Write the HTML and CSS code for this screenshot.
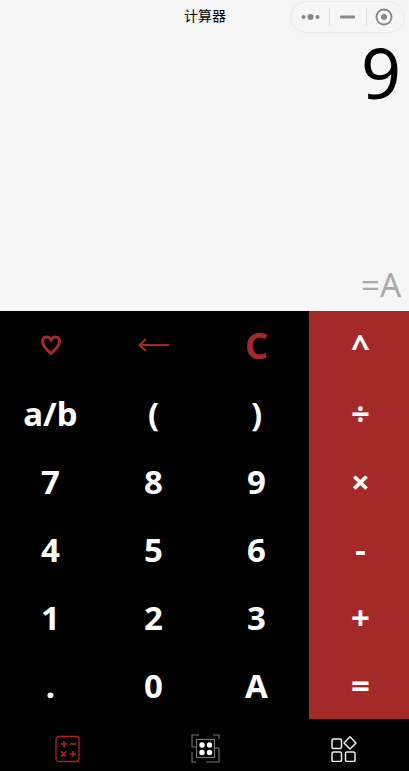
FILE: index.html
```html
<!DOCTYPE html>
<html lang="zh">
<head>
  <meta charset="UTF-8">
  <meta name="viewport" content="width=device-width, initial-scale=1.0">
  <title>计算器</title>
  <link rel="stylesheet" href="styles.css">
</head>
<body>
  <div class="display">
    <div class="title-bar">
      <span class="title">计算器</span>
      <div class="capsule">
        <svg class="cap-icon" width="20" height="8" viewBox="0 0 20 8"><circle cx="2.5" cy="4" r="2"/><circle cx="9.5" cy="4" r="3"/><circle cx="16.5" cy="4" r="2"/></svg>
        <i class="cap-line"></i>
        <svg class="cap-icon" width="16" height="4" viewBox="0 0 16 4"><rect y="0.5" width="15" height="3" rx="1"/></svg>
        <i class="cap-line"></i>
        <svg class="cap-icon" width="18" height="18" viewBox="0 0 18 18"><circle cx="9" cy="9" r="7.5" fill="none" stroke="#888" stroke-width="1.8"/><circle cx="9" cy="9" r="3"/></svg>
      </div>
    </div>
    <div class="value">9</div>
    <div class="result">=A</div>
  </div>

  <div class="keypad">
    <div class="keys">
      <button class="key red">
        <svg width="22" height="22" viewBox="0 0 22 22"><path d="M11 19.5 C8 16.5 2.500 12.500 2.500 7.500 C2.500 4.500 4.500 3 6.500 3 C8.500 3 10 4.200 11 6 C12 4.200 13.500 3 15.500 3 C17.500 3 19.500 4.500 19.500 7.500 C19.500 12.500 14 16.500 11 19.500 Z" fill="none" stroke="#a42a2a" stroke-width="3"/></svg>
      </button>
      <button class="key red">
        <svg width="32" height="14" viewBox="0 0 32 14"><path d="M31 7 H2 M8 1 L1.500 7 L8 13" fill="none" stroke="#a42a2a" stroke-width="2.200"/></svg>
      </button>
      <button class="key red big">C</button>
      <button class="key">a/b</button>
      <button class="key">(</button>
      <button class="key">)</button>
      <button class="key">7</button>
      <button class="key">8</button>
      <button class="key">9</button>
      <button class="key">4</button>
      <button class="key">5</button>
      <button class="key">6</button>
      <button class="key">1</button>
      <button class="key">2</button>
      <button class="key">3</button>
      <button class="key">.</button>
      <button class="key">0</button>
      <button class="key">A</button>
    </div>
    <div class="ops">
      <button class="key">^</button>
      <button class="key">÷</button>
      <button class="key">×</button>
      <button class="key">-</button>
      <button class="key">+</button>
      <button class="key">=</button>
    </div>
  </div>

  <div class="tabbar">
    <div class="tab">
      <svg width="26" height="28" viewBox="0 0 26 28" fill="none" stroke="#b0201a" stroke-width="1.300">
        <rect x="1" y="1.500" width="23" height="25" rx="3"/>
        <path d="M6 9 H12 M9 6 V12 M15 9 H21 M6 16.500 L11 21.500 M11 16.500 L6 21.500 M15 19 H21 M18 16 V22" stroke-width="1.600"/>
      </svg>
    </div>
    <div class="tab">
      <svg width="30" height="30" viewBox="0 0 30 30" fill="none">
        <path d="M8 1 H1 V13 H5 M22 1 H28 V5 M1 18 V28 H5 M15 28 H28 V14 H24" stroke="#777" stroke-width="1.100"/>
        <rect x="5.500" y="5.500" width="18" height="18" stroke="#777" stroke-width="1.100"/>
        <circle cx="11" cy="11" r="2.700" fill="#fff"/>
        <circle cx="18.500" cy="11" r="2.700" fill="#fff"/>
        <circle cx="11" cy="18.500" r="2.700" fill="#fff"/>
        <circle cx="18.500" cy="18.500" r="2.700" fill="#fff"/>
      </svg>
    </div>
    <div class="tab">
      <svg width="26" height="26" viewBox="0 0 26 26" fill="none" stroke="#eee" stroke-width="1.500">
        <rect x="1" y="3" width="9.500" height="9.500" rx="1.500"/>
        <path d="M19 0.800 L25 7 L19 13 L13 7 Z" stroke-linejoin="round"/>
        <rect x="1" y="16" width="9.500" height="9.500" rx="1.500"/>
        <rect x="14.500" y="16" width="9.500" height="9.500" rx="1.500"/>
      </svg>
    </div>
  </div>
</body>
</html>
```

FILE: styles.css
```css
* {
  box-sizing: border-box;
}

html, body {
  height: 100%;
}

body {
  margin: 0;
  height: 771px;
  overflow: hidden;
  display: flex;
  flex-direction: column;
  background-color: #000;
  font-family: "Noto Sans", "Noto Sans CJK SC", sans-serif;
}

/* top part with the numbers */
.display {
  height: 311px;
  background-color: #f6f6f6;
  padding: 0 8px 0 0;
  display: flex;
  flex-direction: column;
  align-items: flex-end;
}

.title-bar {
  width: 100%;
  height: 37px;
  position: relative;
}

.title {
  position: absolute;
  left: 184px;
  top: 7px;
  font-size: 14px;
  line-height: 17px;
  color: #000;
  font-family: "Noto Sans CJK SC", sans-serif;
}

.capsule {
  position: absolute;
  right: -4px;
  top: 1px;
  width: 115px;
  height: 32px;
  border: 1px solid #ececec;
  border-radius: 16px;
  display: flex;
  align-items: center;
  padding-left: 10px;
}

.cap-icon {
  fill: #888;
  flex: none;
}

.cap-line {
  width: 1px;
  height: 18px;
  margin: 0 10px 0 8px;
  background-color: #e0e0e0;
}

.cap-line + .cap-icon + .cap-line {
  margin: 0 8px 0 10px;
}

.value {
  margin-top: -3px;
  font-size: 70px;
  line-height: 76px;
  color: #000;
}

.result {
  margin-top: auto;
  padding-bottom: 8px;
  font-size: 33px;
  line-height: 36px;
  color: #aaa;
}

/* keys */
.keypad {
  height: 408px;
  display: flex;
}

.keys {
  width: 309px;
  display: grid;
  grid-template-columns: repeat(3, 103px);
  grid-auto-rows: 68px;
  margin-left: -1px;
}

.ops {
  width: 100px;
  margin-left: 1px;
  padding-left: 3px;
  background-color: #a42a2a;
  display: grid;
  grid-auto-rows: 68px;
}

.key {
  border: none;
  padding: 0;
  background: none;
  color: #fff;
  font-family: inherit;
  font-size: 33px;
  font-weight: 700;
  display: flex;
  align-items: center;
  justify-content: center;
}

.red {
  color: #a42a2a;
}

.big {
  font-size: 36px;
}

.tabbar {
  height: 52px;
  padding-top: 7px;
  display: grid;
  grid-template-columns: 135px 142px 134px;
}

.tab {
  display: flex;
  align-items: center;
  justify-content: center;
}
```
